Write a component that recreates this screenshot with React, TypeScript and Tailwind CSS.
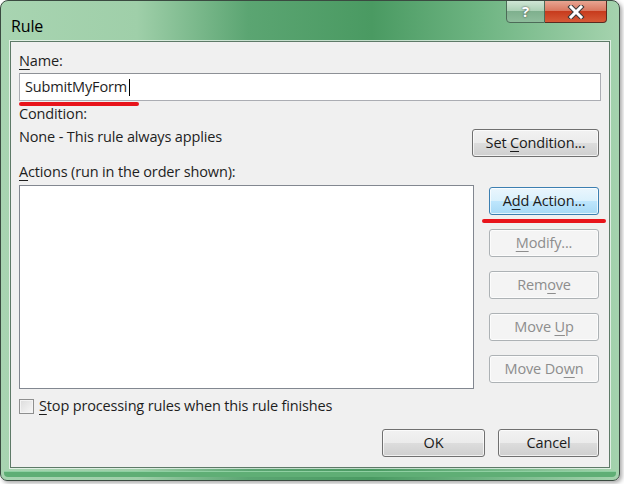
import type { ReactNode } from 'react';

function U({ children }: { children: ReactNode }) {
  return <span className="underline underline-offset-[3px] decoration-1">{children}</span>;
}

type Kind = 'normal' | 'hot' | 'off';

function Btn({ children, className, kind = 'normal' }: { children: ReactNode; className: string; kind?: Kind }) {
  const look =
    kind === 'hot'
      ? 'border-[#3c7fb1] bg-[linear-gradient(#eaf6fd_0%,#d9f0fc_50%,#bee6fd_50%,#a7d9f5_100%)] text-[#1b1b1b]'
      : kind === 'off'
        ? 'border-[#adb2b5] bg-[#f4f4f4] text-[#8d8d8d]'
        : 'border-[#707070] bg-[linear-gradient(#f2f2f2_0%,#ebebeb_50%,#dddddd_50%,#cfcfcf_100%)] text-[#1b1b1b]';
  return (
    <div
      className={`h-[28px] flex items-center justify-center rounded-[3px] border shadow-[inset_0_0_0_1px_rgba(255,255,255,0.7)] ${look} ${className}`}
    >
      <span>{children}</span>
    </div>
  );
}

export default function App() {
  return (
    <div className="w-[624px] h-[484px] bg-white font-['Segoe_UI','Open_Sans',sans-serif] text-[14.5px] tracking-[-0.15px] text-[#1e1e1e]">
      <div className="relative w-[620px] h-[481px] rounded-t-[8px] rounded-b-[7px] border border-[#3a4a40] bg-[linear-gradient(90deg,#a8d4b1_0%,#9fcfa9_22%,#5ba572_40%,#4a9a62_60%,#6fb583_78%,#a5d3ae_100%)] shadow-[2px_2px_4px_rgba(0,0,0,0.35)] overflow-hidden">
        {/* title bar */}
        <div className="h-[40px] flex items-start pl-[10px] pt-[13px] text-[16px] text-black">Rule</div>

        {/* caption buttons */}
        <div className="absolute top-[-1px] right-[12px] flex">
          <div className="w-[39px] h-[23px] rounded-bl-[4px] border border-[#4d6b58] bg-[linear-gradient(#cfe6d5_0%,#a9cfb3_50%,#7fb08e_50%,#8fbd9c_100%)] flex items-center justify-center text-white text-[15px] font-bold [text-shadow:0_0_2px_#333]">
            ?
          </div>
          <div className="w-[62px] h-[23px] rounded-br-[4px] border border-l-0 border-[#5a2a20] bg-[linear-gradient(#e8a592_0%,#d8745c_50%,#c73b1d_50%,#d65a37_100%)] flex items-center justify-center">
            <svg width="18" height="14" viewBox="0 0 18 14">
              <path d="M4 2 L14 12 M14 2 L4 12" stroke="#3a3a3a" strokeWidth="5" strokeLinecap="square" />
              <path d="M4 2 L14 12 M14 2 L4 12" stroke="#ffffff" strokeWidth="3" strokeLinecap="square" />
            </svg>
          </div>
        </div>

        {/* client area */}
        <div className="relative mx-[9px] h-[427px] border border-[#5e7a68] bg-[#f0f0f0] shadow-[0_0_0_1px_rgba(255,255,255,0.65)] pl-[8px] pr-[10px] pt-[9px]">
          <div className="h-[20px] leading-[20px]">
            <U>N</U>ame:
          </div>
          <div className="mt-[2px] w-[582px] h-[28px] border border-[#abadb3] border-t-[#8d9096] bg-white flex items-center pl-[5px]">
            SubmitMyForm<span className="ml-[2px] w-px h-[17px] bg-black" />
          </div>

          <div className="mt-[2px] flex justify-between">
            <div>
              <div className="mt-[1px] h-[20px] leading-[20px]">Condition:</div>
              <div className="mt-[3px] h-[20px] leading-[20px]">None - This rule always applies</div>
            </div>
            <Btn className="w-[127px] mt-[26px]">
              Set <U>C</U>ondition...
            </Btn>
          </div>

          <div className="mt-[5px] h-[20px] leading-[20px]">
            <U>A</U>ctions (run in the order shown):
          </div>

          <div className="mt-[3px] flex justify-between">
            <div className="w-[455px] h-[204px] border border-[#828790] bg-white" />
            <div className="mt-[2px] flex flex-col gap-[14px]">
              <Btn className="w-[110px]" kind="hot">
                A<U>d</U>d Action...
              </Btn>
              <Btn className="w-[110px]" kind="off">
                <U>M</U>odify...
              </Btn>
              <Btn className="w-[110px]" kind="off">
                Rem<U>o</U>ve
              </Btn>
              <Btn className="w-[110px]" kind="off">
                Move <U>U</U>p
              </Btn>
              <Btn className="w-[110px]" kind="off">
                Move Do<U>w</U>n
              </Btn>
            </div>
          </div>

          <div className="mt-[9px] h-[16px] flex items-center gap-[5px]">
            <div className="w-[15px] h-[15px] border border-[#8e8f8f] bg-[linear-gradient(135deg,#dcdcdc,#f8f8f8)] shadow-[inset_0_0_0_1px_#f4f4f4]" />
            <div className="leading-[16px]">
              <U>S</U>top processing rules when this rule finishes
            </div>
          </div>

          <div className="mt-[15px] flex justify-end gap-[13px]">
            <Btn className="w-[103px]">OK</Btn>
            <Btn className="w-[101px]">Cancel</Btn>
          </div>

          {/* red annotation marks */}
          <div className="absolute left-[8px] top-[60px] w-[120px] h-[4px] rounded-full bg-[#e8141b]" />
          <div className="absolute left-[471px] top-[177px] w-[124px] h-[4px] rounded-full bg-[#e8141b]" />
        </div>

        {/* bottom frame stripe */}
        <div className="mx-[3px] mt-[4px] h-[5px] rounded-b-[4px] bg-[#5fae75] shadow-[0_-1px_0_#8fd0a2]" />
      </div>
    </div>
  );
}
